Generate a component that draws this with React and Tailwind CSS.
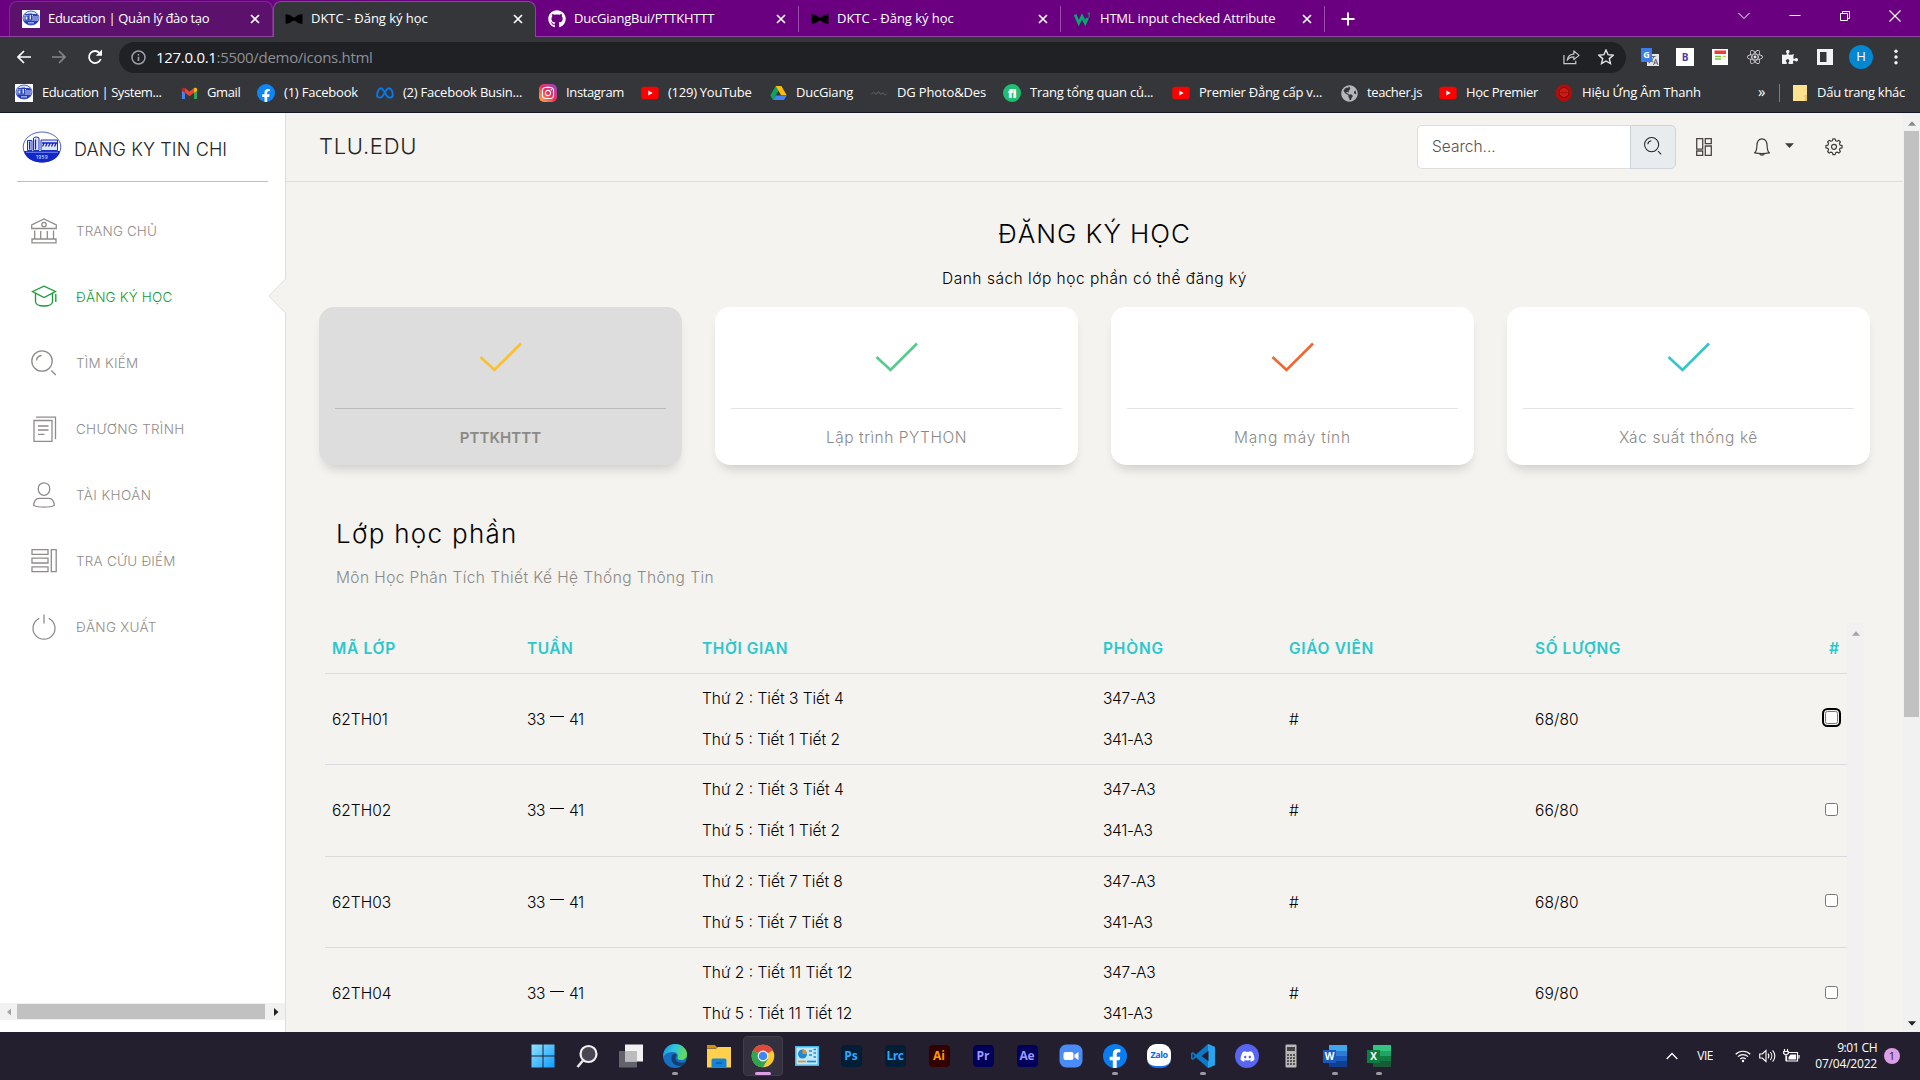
import React from "react";
import { FaGithub, FaReact, FaDiscord, FaFacebookF, FaInstagram, FaPuzzlePiece, FaGlobeAmericas } from "react-icons/fa";
import { MdTranslate } from "react-icons/md";

/* ---------- brand glyphs ---------- */

function SchoolFavicon() {
  return (
    <svg viewBox="0 0 18 18" className="size-[18px]">
      <rect width="18" height="18" fill="#fff" />
      <ellipse cx="9" cy="8" rx="8" ry="7" fill="#dfe5fa" stroke="#3450c0" strokeWidth="0.9" />
      <path d="M3 4.5h12M3 6h3v4H3zM7 4h2.5v6H7zM11 6v4M13 6v4M15 6v4M11 5.5h5" stroke="#2a44b8" strokeWidth="1.1" fill="none" />
      <path d="M1.5 10.5h15a8 6.5 0 0 1-15 0z" fill="#2339c4" />
      <rect x="6" y="12.2" width="6" height="1.2" fill="#b8c3f4" />
    </svg>
  );
}

function BowTie() {
  return (
    <svg viewBox="0 0 18 12" className="w-[18px] h-3">
      <path d="M0.5 1.5 Q4 0.5 8 4.2 h2 Q14 0.5 17.5 1.5 v9 Q14 11.5 10 7.8 h-2 Q4 11.5 0.5 10.5z" fill="#000" />
    </svg>
  );
}

function W3Icon() {
  return (
    <svg viewBox="0 0 18 18" className="size-[18px]">
      <path d="M1 4.5 4.8 13 8 6.5 11.3 13 13.5 8" stroke="#04aa6d" strokeWidth="2.8" fill="none" />
      <path d="M13.5 3.2h2.4l-1.4 1.9c1.4.1 1.6 2.1-.6 2.2" stroke="#04aa6d" strokeWidth="1" fill="none" />
    </svg>
  );
}

function GmailIcon() {
  return (
    <svg viewBox="0 0 18 18" className="size-[17px]">
      <path d="M1 4.5v10.2h3.2V8z" fill="#4285f4" />
      <path d="M17 4.5v10.2h-3.2V8z" fill="#34a853" />
      <path d="M1 4.6C1 2.8 3 2.3 4.2 3.3v5L1 6z" fill="#c5221f" />
      <path d="M17 4.6c0-1.8-2-2.3-3.2-1.3v5L17 6z" fill="#fbbc04" />
      <path d="M4.2 3.3 9 7l4.8-3.7v5L9 12 4.2 8.3z" fill="#ea4335" />
    </svg>
  );
}

function FacebookIcon({ big }) {
  return (
    <span className={big ? "size-6 rounded-full bg-[#0a7cf0] flex items-end justify-center overflow-hidden" : "size-[18px] rounded-full bg-[#0f86f5] flex items-end justify-center overflow-hidden"}>
      <FaFacebookF className={big ? "text-white text-[20px] translate-y-px" : "text-white text-[14px] translate-y-px"} />
    </span>
  );
}

function MetaIcon() {
  return (
    <svg viewBox="0 0 18 12" className="w-[18px] h-[14px]">
      <path d="M1.2 9C1 5 2.600 1.200 5 1.200c3 0 5 9.400 8.200 9.400 2 0 3.600-.6 3.600-2.400 0-3.400-1.600-7-4-7C9.800 1.200 7.600 10.600 4.400 10.600c-1.800 0-3.100-.2-3.200-1.600z" fill="none" stroke="#0a78e8" strokeWidth="1.900" />
    </svg>
  );
}

function InstagramIcon() {
  return (
    <span className="size-[18px] rounded-[5px] bg-linear-to-tr from-[#fdb23b] via-[#ee2a5a] to-[#8a35c9] flex items-center justify-center">
      <FaInstagram className="text-white text-[14px]" />
    </span>
  );
}

function YouTubeIcon() {
  return (
    <svg viewBox="0 0 18 18" className="size-[18px]">
      <rect x="0.3" y="2.8" width="17.4" height="12.4" rx="3" fill="#f00" />
      <path d="M7.3 6.4v5.2L11.6 9z" fill="#fff" />
    </svg>
  );
}

function DriveIcon() {
  return (
    <svg viewBox="0 0 18 16" className="w-[17px] h-4">
      <path d="M6 0.5h6l-3 5L3.2 15.5 0.3 10.6z" fill="#11a35b" />
      <path d="M6 0.5h6l5.7 10h-5.9z" fill="#fbbd0a" />
      <path d="M6.2 10.6h11.5l-2.9 4.9H3.2z" fill="#4285f4" />
    </svg>
  );
}

function SignatureIcon() {
  return (
    <svg viewBox="0 0 16 8" className="w-4 h-2">
      <path d="M0.5 5c2-2 3-2 4 0s2-3 3.500-2 .5 2.500 2 2 2-2 3 0 1.500.5 2.500 0" fill="none" stroke="#6b6c70" strokeWidth="0.9" />
    </svg>
  );
}

function FiverrIcon() {
  return (
    <span className="size-[18px] rounded-full bg-[#1dbf73] text-white font-extrabold text-[13px] leading-none flex items-center justify-center tracking-[-0.5px]">fi</span>
  );
}

function SealIcon() {
  return (
    <svg viewBox="0 0 18 18" className="size-[18px]">
      <path d="M9 .6c5 0 8 3.300 8 8.200S13.500 17.500 9 17.500 .8 13.700 1 8.800 4 .6 9 .6z" fill="#b30d0d" />
      <circle cx="9" cy="8.500" r="5" fill="#cc1c18" stroke="#850808" strokeWidth="1" />
      <path d="M5.500 8.500h7" stroke="#a3100e" strokeWidth="1.400" />
    </svg>
  );
}

function FolderIcon() {
  return (
    <svg viewBox="0 0 14 16" className="w-[14px] h-4">
      <path d="M0 0h14v16H0z" fill="#fce28f" />
      <path d="M10 11.500h2v4.500h2v-6h-2z" fill="#f0c656" />
    </svg>
  );
}

/* ---------- browser chrome ---------- */

function CloseX({ className }) {
  return (
    <svg viewBox="0 0 10 10" className={className}>
      <path d="M1 1l8 8M9 1l-8 8" stroke="#fff" strokeWidth="1.700" fill="none" />
    </svg>
  );
}

function Tab({ icon, title, className, textClass, end }) {
  return (
    <div className={"flex items-center " + className}>
      <span className="w-[18px] flex justify-center shrink-0">{icon}</span>
      <span className={"ml-2 flex-1 whitespace-nowrap text-[13px] text-white " + textClass}>{title}</span>
      <CloseX className={"size-[10px] shrink-0 " + end} />
    </div>
  );
}

function TabStrip() {
  return (
    <div className="h-[37px] bg-[#6a0080] flex items-stretch border-b border-[#8e44a0]">
      <div className="w-[9px]" />
      <Tab icon={<SchoolFavicon />} title="Education | Quản lý đào tạo" textClass="tracking-[-0.33px]" end="mr-3"
        className="w-[264px] pl-3 bg-[#5c126c] border border-b-0 border-[#7d2a90] rounded-t-lg mt-px" />
      <Tab icon={<BowTie />} title="DKTC - Đăng ký học" textClass="tracking-[-0.05px]" end="mr-3"
        className="w-[263px] pl-[11px] bg-[#35363a] border border-b-0 border-[#8e44a0] rounded-t-lg -mb-px mt-px pb-px" />
      <Tab icon={<FaGithub className="text-white text-[18px]" />} title="DucGiangBui/PTTKHTTT" textClass="tracking-[-0.2px]" end="mr-3" className="w-[262px] pl-3 pt-0.5" />
      <div className="w-px h-[26px] mt-[6px] bg-[#9a4daa]" />
      <Tab icon={<BowTie />} title="DKTC - Đăng ký học" textClass="tracking-[-0.05px]" end="mr-3" className="w-[261px] pl-3 pt-0.5" />
      <div className="w-px h-[26px] mt-[6px] bg-[#9a4daa]" />
      <Tab icon={<W3Icon />} title="HTML input checked Attribute" textClass="tracking-[-0.2px]" end="mr-3" className="w-[263px] pl-[13px] pt-0.5" />
      <div className="w-px h-[26px] mt-[6px] bg-[#9a4daa]" />
      <svg viewBox="0 0 14 14" className="size-[14px] mt-3 ml-4">
        <path d="M7 0.500v13M0.500 7h13" stroke="#fff" strokeWidth="2" />
      </svg>
      <div className="ml-auto flex items-start pt-[10px] pr-[19px]">
        <svg viewBox="0 0 12 12" className="size-3 mr-[39px]"><path d="M0.500 3 6 8.500 11.500 3" fill="none" stroke="#fff" strokeWidth="1" /></svg>
        <svg viewBox="0 0 12 12" className="size-3 mr-[38px]"><path d="M0.500 5.500h11" stroke="#fff" strokeWidth="1" /></svg>
        <svg viewBox="0 0 12 12" className="size-3 mr-[38px]"><path d="M1.500 3.500h7v7h-7zM3.500 3.500v-2h7v7h-2" fill="none" stroke="#fff" strokeWidth="1" /></svg>
        <svg viewBox="0 0 12 12" className="size-3"><path d="M0.500 0.500l11 11M11.500 0.500l-11 11" fill="none" stroke="#fff" strokeWidth="1.100" /></svg>
      </div>
    </div>
  );
}

function Toolbar() {
  return (
    <div className="h-[39px] flex items-center pl-[17px] pr-[18px] pt-px">
      <svg viewBox="0 0 14 14" className="size-[14px]"><path d="M14 7H1.500M7 1 1 7l6 6" fill="none" stroke="#fff" strokeWidth="1.700" /></svg>
      <svg viewBox="0 0 14 14" className="size-[14px] ml-[21px]"><path d="M0 7h12.500M7 1l6 6-6 6" fill="none" stroke="#85868a" strokeWidth="1.700" /></svg>
      <svg viewBox="0 0 16 16" className="size-4 ml-[21px]">
        <path d="M13.700 10A6 6 0 1 1 12.500 4" fill="none" stroke="#fff" strokeWidth="1.800" />
        <path d="M15 0.500v6.200H8.800z" fill="#fff" />
      </svg>
      <div className="ml-4 w-[1507px] h-[31px] rounded-full bg-[#202124] flex items-center pl-3 pr-3">
        <svg viewBox="0 0 15 15" className="size-[15px]">
          <circle cx="7.500" cy="7.500" r="6.500" fill="none" stroke="#9aa0a6" strokeWidth="1.500" />
          <path d="M7.500 6.700v4.300M7.500 4v1.600" stroke="#9aa0a6" strokeWidth="1.600" />
        </svg>
        <span className="ml-[10px] text-[15px] tracking-[-0.3px] text-[#8d9096]"><span className="text-white">127.0.0.1</span>:5500/demo/icons.html</span>
        <svg viewBox="0 0 18 16" className="ml-auto w-[17px] h-4">
          <path d="M1 6v9h12.500v-3" fill="none" stroke="#c4c7cb" strokeWidth="1.300" />
          <path d="M4.500 11.500C5 7.500 7.500 5 11.500 5V1.500L17 6.300l-5.500 4.500V7.800c-3 0-5.500 1-7 3.700z" fill="none" stroke="#c4c7cb" strokeWidth="1.300" strokeLinejoin="round" />
        </svg>
        <svg viewBox="0 0 16 16" className="size-4 ml-[18px]">
          <path d="M8 1l2.100 4.700 5.100.5-3.900 3.400 1.200 5L8 12l-4.500 2.600 1.200-5L.8 6.200l5.100-.5z" fill="none" stroke="#e4e6e9" strokeWidth="1.400" />
        </svg>
      </div>
      <div className="flex items-center ml-[15px] gap-[17px]">
        <span className="relative w-[18px] h-[18px]">
          <MdTranslate className="absolute right-0 bottom-0 size-[12px] bg-[#e3e5e8] text-[#5f6368]" />
          <span className="absolute left-0 top-0 w-[11px] h-[14px] bg-[#3b7ded] text-white text-[9px] font-bold leading-[14px] text-center">G</span>
        </span>
        <span className="size-[18px] bg-white text-[#4b3aa5] text-[10px] font-bold flex items-center justify-center">B</span>
        <svg viewBox="0 0 16 16" className="size-4 mx-px">
          <path d="M0 0h16v16H0z" fill="#fff" /><path d="M2.500 1.500h11.500v3.500H2.500z" fill="#ee3b3b" />
          <path d="M3 7.500h6M3 10h6" stroke="#7bc043" strokeWidth="1.500" /><path d="M10.500 7.500h3.500" stroke="#e6c64a" strokeWidth="1.500" />
        </svg>
        <FaReact className="size-4 text-[#e8e8e8] mx-px" />
        <FaPuzzlePiece className="size-4 text-[#f1f3f4] mx-px" />
        <svg viewBox="0 0 16 16" className="size-4 mx-px"><path d="M0 0h16v16H0zM3 3v10h6.500V3z" fill="#f1f3f4" fillRule="evenodd" /></svg>
        <span className="size-6 -ml-[2px] rounded-full bg-[#0288d1] text-white text-[13px] flex items-center justify-center">H</span>
        <svg viewBox="0 0 4 16" className="w-1 h-4 ml-1"><circle cx="2" cy="2.200" r="1.700" fill="#f1f3f4" /><circle cx="2" cy="8" r="1.700" fill="#f1f3f4" /><circle cx="2" cy="13.800" r="1.700" fill="#f1f3f4" /></svg>
      </div>
    </div>
  );
}

const bookmarks = [
  { icon: <SchoolFavicon />, label: "Education | System...", box: "w-[165px] tracking-[-0.42px]" },
  { icon: <GmailIcon />, label: "Gmail", box: "w-[77px] tracking-[-0.4px]" },
  { icon: <FacebookIcon />, label: "(1) Facebook", box: "w-[119px] tracking-[-0.2px]" },
  { icon: <MetaIcon />, label: "(2) Facebook Busin...", box: "w-[163px] tracking-[-0.22px]" },
  { icon: <InstagramIcon />, label: "Instagram", box: "w-[102px] tracking-[-0.36px]" },
  { icon: <YouTubeIcon />, label: "(129) YouTube", box: "w-[128px] tracking-[-0.25px]" },
  { icon: <DriveIcon />, label: "DucGiang", box: "w-[101px] tracking-[-0.2px]" },
  { icon: <SignatureIcon />, label: "DG Photo&Des", box: "w-[133px] tracking-[-0.15px]" },
  { icon: <FiverrIcon />, label: "Trang tổng quan củ...", box: "w-[169px] tracking-[-0.22px]" },
  { icon: <YouTubeIcon />, label: "Premier Đẳng cấp v...", box: "w-[168px] tracking-[-0.25px]" },
  { icon: <FaGlobeAmericas className="size-[17px] text-[#b4b8bd]" />, label: "teacher.js", box: "w-[99px] tracking-[-0.38px]" },
  { icon: <YouTubeIcon />, label: "Học Premier", box: "w-[116px] tracking-[-0.3px]" },
  { icon: <SealIcon />, label: "Hiệu Ứng Âm Thanh", box: "w-[203px] tracking-[-0.18px]" },
];

function BookmarksBar() {
  return (
    <div className="h-9 flex items-center pl-[15px] pr-[15px] pb-[2px] text-[13px] text-white whitespace-nowrap">
      {bookmarks.map((b, i) => (
        <div key={i} className={"flex items-center gap-[9px] " + b.box}>
          <span className="w-[18px] flex justify-center">{b.icon}</span>
          <span>{b.label}</span>
        </div>
      ))}
      <span className="text-[15px] -mt-1">»</span>
      <div className="w-px h-[18px] bg-[#7b7c80] ml-auto mr-[13px]" />
      <FolderIcon />
      <span className="ml-[10px] tracking-[-0.28px]">Dấu trang khác</span>
    </div>
  );
}

/* ---------- line icons of the dashboard ---------- */

function LineIcon({ className, children, width = 1.3 }) {
  return (
    <svg viewBox="0 0 26 26" className={className} fill="none" stroke="currentColor" strokeWidth={width}>
      {children}
    </svg>
  );
}

const glyphs = {
  bank: <><path d="M.7 10.500V6.800L13 .9l12.300 5.900v3.700zM3.700 12.500v8M9.700 13v7.500M16.300 13v7.500M22.500 12.500v8M1 21h24v3.900H1z" /><circle cx="13" cy="6.500" r="2.200" /></>,
  hat: <><path d="M1.500 7.500 13 2.200l11.500 5.300L13 13.500zM4.500 9.500v8c0 6 17 6 17 0v-8M24.800 10v8" /></>,
  zoom: <><circle cx="11" cy="11" r="10.200" /><path d="M5.500 10.500c.3-3 2-4.700 5-5M20.300 20.500l4.500 4.500" /></>,
  paper: <><path d="M3 4.500h18v20.800H3zM5 1.200h19.500v22M7 10h10.500M7 14h10.500M7 18.300h6.500" /></>,
  user: <><path d="M13 .8c3.500 0 5.800 2.600 5.800 6.200S16 13.400 13 13.400 7.200 10.600 7.200 7 9.500.8 13 .8zM8 16.300h10c3 0 5.300 3 5.300 7.200-4.500 2.200-16 2.200-20.600 0 0-4.200 2.300-7.200 5.300-7.200z" /></>,
  layout: <><path d="M1 1.600h16v4.800H1zM1 10.200h16V15H1zM1 18.800h16v4.800H1zM20.300 1.600h4.900v22h-4.900z" /></>,
  power: <><path d="M13 .5v9M8.200 4.300a11 11 0 1 0 9.600 0" /></>,
};

const menu = [
  { icon: "bank", label: "TRANG CHỦ", track: "tracking-[0.1px]" },
  { icon: "hat", label: "ĐĂNG KÝ HỌC", track: "tracking-[0.18px]", active: true },
  { icon: "zoom", label: "TÌM KIẾM", track: "tracking-[0.22px]" },
  { icon: "paper", label: "CHƯƠNG TRÌNH", track: "tracking-[0.28px]" },
  { icon: "user", label: "TÀI KHOẢN", track: "tracking-[0.4px]" },
  { icon: "layout", label: "TRA CỨU ĐIỂM", track: "tracking-[0.22px]" },
  { icon: "power", label: "ĐĂNG XUẤT", track: "tracking-[0.28px]" },
];

function SchoolLogo() {
  return (
    <svg viewBox="0 0 40 32" className="w-10 h-8">
      <ellipse cx="20" cy="16" rx="18.800" ry="15" fill="#fff" stroke="#2038b8" strokeWidth="0.8" />
      <path d="M2 20h36C36.500 27.500 29 31.500 20 31.500S3.500 27.500 2 20z" fill="#1226c8" />
      <path d="M5.500 9.500h4.500v10H5.500zM11.500 7c1.500-1.500 4.500-1 5.500 0v12.500h-5.500zM19 9h16.500v10.500H19z" fill="#dfe5fd" stroke="#1a30be" strokeWidth="1" />
      <path d="M7.700 10.500v8M13.500 8.500v10M20 12h15M20.500 15.500l1.500-3M23.500 15.500l1.500-3M26.500 15.500l1.500-3M29.500 15.500l1.500-3M32.500 15.500l1.500-3" stroke="#1226c0" strokeWidth="1.300" />
      <path d="M4 21.300h32" stroke="#9fb0ff" strokeWidth="0.700" />
      <text x="20" y="28.300" textAnchor="middle" fontSize="4.800" fontFamily="Inter" letterSpacing="0.3" fill="#dfe5ff">1959</text>
    </svg>
  );
}

function Sidebar() {
  return (
    <aside className="relative w-[286px] shrink-0 bg-white border-r border-[#ddd] flex flex-col">
      <div className="mx-[17px] h-[69px] border-b border-[#bdbdbd] flex items-start pt-[18px] pl-[5px]">
        <SchoolLogo />
        <span className="ml-3 mt-[5px] text-[18px] leading-[27px] font-light tracking-[0.12px] text-[#252422]">DANG KY TIN CHI</span>
      </div>
      <nav className="flex flex-col mt-4">
        {menu.map((m) => (
          <div key={m.icon} className={"h-[66px] flex items-center pl-[31px] " + (m.active ? "text-[#159a35]" : "text-[#8f8d89]")}>
            <LineIcon className="size-[26px]" width={1.3}>{glyphs[m.icon]}</LineIcon>
            <span className={"ml-[19px] text-[13.5px] font-light " + m.track}>{m.label}</span>
          </div>
        ))}
      </nav>
      <svg viewBox="0 0 18 36" className="absolute -right-px top-[165px] w-[18px] h-9">
        <path d="M18 .5 1 18l17 17.500z" fill="#f4f3ef" />
        <path d="M17.500 1 1 18l16.500 17" fill="none" stroke="#ddd" strokeWidth="1" />
      </svg>
      <div className="mt-auto mb-3 h-[17px] bg-[#f1f1f1] flex items-center justify-between px-[6px]">
        <svg viewBox="0 0 6 8" className="w-[6px] h-2"><path d="M5 .5v7L1 4z" fill="#a3a3a3" /></svg>
        <div className="w-[248px] h-[15px] bg-[#c1c1c1] -ml-1" />
        <svg viewBox="0 0 6 8" className="w-[6px] h-2"><path d="M1 0v8L5.500 4z" fill="#222" /></svg>
      </div>
    </aside>
  );
}

function Navbar() {
  return (
    <header className="h-[69px] border-b border-[#ddd] flex items-start pl-[33px] text-[#403d39]">
      <span className="mt-[17px] text-[22px] leading-8 font-light tracking-[0.7px] text-[#252422]">TLU.EDU</span>
      <div className="ml-auto mt-3 flex h-[44px]">
        <div className="w-[213px] bg-white border border-[#ddd] border-r-0 rounded-l-[5px] flex items-center pl-[14px] text-[15.5px] font-light text-[#55524d]">Search...</div>
        <div className="w-[46px] bg-[#e9ecef] border border-[#ced4da] rounded-r-[5px] flex justify-center pt-[11px]">
          <LineIcon className="size-[18px] text-[#212529]" width={1.5}>{glyphs.zoom}</LineIcon>
        </div>
      </div>
      <svg viewBox="0 0 16 18" className="w-4 h-[18px] mt-[25px] ml-5" fill="none" stroke="#4a4542" strokeWidth="1.300">
        <path d="M.7.700h6v10.500h-6zM9.300.700h6v5h-6zM.7 13h6v4.300h-6zM9.300 8h6v9.300h-6z" />
      </svg>
      <svg viewBox="0 0 16 18" className="w-4 h-[18px] mt-[25px] ml-[42px]" fill="none" stroke="#403d39" strokeWidth="1.200">
        <path d="M.7 14.800c2-1.500 2-3.300 2.200-7C3 3.500 5 .8 8 .8s5 2.700 5.100 7c.2 3.700.2 5.500 2.200 7-4 .8-10.600.8-14.600 0zM5.500 15.500c.5 2.200 4.500 2.200 5 0" />
      </svg>
      <svg viewBox="0 0 9 5" className="w-[9px] h-[5px] mt-[30px] ml-[15px]"><path d="M0 .3h9L4.500 5z" fill="#403d39" /></svg>
      <svg viewBox="0 0 18 18" className="size-[18px] mt-[25px] ml-[31px] mr-[60px]" fill="none" stroke="#403d39" strokeWidth="1.200" strokeLinejoin="round">
        <path d="M7.400 2.700 7.900.800h2.200l.5 1.900 1.500.6 1.700-1 1.600 1.600-1 1.700.6 1.500 2.100.5v2.200l-2.100.5-.6 1.500 1 1.700-1.600 1.600-1.700-1-1.500.6-.5 2H7.900l-.5-2-1.500-.6-1.700 1-1.600-1.600 1-1.700-.6-1.500-2.100-.5V7.600L3 7.100l.6-1.500-1-1.700 1.600-1.600 1.700 1z" />
        <circle cx="9" cy="8.800" r="2.500" />
      </svg>
    </header>
  );
}

const cards = [
  { name: "PTTKHTTT", check: "text-[#fbc02d]", box: "bg-[#ddd]", line: "border-[#bbb]", label: "font-semibold text-[15px] tracking-[0.1px] text-[#8b8986]" },
  { name: "Lập trình PYTHON", check: "text-[#56cc8c]", box: "bg-white", line: "border-[#e3e3e3]", label: "font-light text-[15.5px] tracking-[0.52px] text-[#8b8986]" },
  { name: "Mạng máy tính", check: "text-[#f0682e]", box: "bg-white", line: "border-[#e3e3e3]", label: "font-light text-[15.5px] tracking-[0.8px] text-[#8b8986]" },
  { name: "Xác suất thống kê", check: "text-[#33c7cd]", box: "bg-white", line: "border-[#e3e3e3]", label: "font-light text-[15.5px] tracking-[0.64px] text-[#8b8986]" },
];

function SubjectCard({ card }) {
  return (
    <div className={"h-[158px] rounded-[15px] shadow-[0_8px_12px_-5px_rgba(0,0,0,0.18)] px-4 flex flex-col items-center " + card.box}>
      <svg viewBox="0 0 44 30" className={"w-11 h-[30px] mt-[35px] " + card.check}>
        <path d="M1.500 15 15.500 28 42 1.500" fill="none" stroke="currentColor" strokeWidth="2.700" />
      </svg>
      <div className={"w-full border-t mt-[36px] " + card.line} />
      <span className={"mt-[17px] leading-6 " + card.label}>{card.name}</span>
    </div>
  );
}

const rows = [
  { code: "62TH01", t1: "Thứ 2 : Tiết 3 Tiết 4", t2: "Thứ 5 : Tiết 1 Tiết 2", count: "68/80", focus: true, h: "h-[91px]" },
  { code: "62TH02", t1: "Thứ 2 : Tiết 3 Tiết 4", t2: "Thứ 5 : Tiết 1 Tiết 2", count: "66/80", h: "h-[92px]" },
  { code: "62TH03", t1: "Thứ 2 : Tiết 7 Tiết 8", t2: "Thứ 5 : Tiết 7 Tiết 8", count: "68/80", h: "h-[91px]" },
  { code: "62TH04", t1: "Thứ 2 : Tiết 11 Tiết 12", t2: "Thứ 5 : Tiết 11 Tiết 12", count: "69/80", h: "h-[92px]" },
];

const columns = "grid grid-cols-[195px_175px_401px_186px_246px_275px_1fr] pl-[7px]";

function ClassTable() {
  return (
    <div className="flex-1 min-h-0 overflow-hidden flex mt-[33px]">
      <div className="w-[1522px] font-light text-[15.5px] text-black">
        <div className={"h-[51px] items-end pb-[12px] border-b border-[#dadbe0] font-semibold text-[#2cc7cb] leading-6 " + columns}>
          <span className="tracking-[0.7px]">MÃ LỚP</span>
          <span className="tracking-[0.5px]">TUẦN</span>
          <span className="tracking-[0.56px]">THỜI GIAN</span>
          <span className="tracking-[0.83px]">PHÒNG</span>
          <span className="tracking-[0.65px]">GIÁO VIÊN</span>
          <span className="tracking-[0.57px]">SỐ LƯỢNG</span>
          <span className="justify-self-end pr-[8px]">#</span>
        </div>
        {rows.map((r) => (
          <div key={r.code} className={"items-center border-b border-[#dadbe0] " + r.h + " " + columns}>
            <span className="pt-px">{r.code}</span>
            <span className="flex items-center tracking-[-0.4px] pt-px">33<span className="w-[14px] h-px bg-black mx-[5px] -mt-[6px]" />41</span>
            <div className="flex flex-col gap-[17px] leading-6"><span>{r.t1}</span><span>{r.t2}</span></div>
            <div className="flex flex-col gap-[17px] leading-6 tracking-[-0.3px]"><span>347-A3</span><span>341-A3</span></div>
            <span className="pt-px">#</span>
            <span className="pt-px tracking-[0.1px]">{r.count}</span>
            <span className={"justify-self-end mr-[9px] -mt-[3px] size-[13px] bg-white border border-[#767676] rounded-[2.500px] " + (r.focus ? "outline-2 outline-offset-1 outline-black" : "")} />
          </div>
        ))}
      </div>
      <div className="w-[17px] bg-[#f1f1f1] flex justify-center pt-2">
        <svg viewBox="0 0 8 5" className="w-2 h-[5px]"><path d="M4 .3 8 4.700H0z" fill="#a3a3a3" /></svg>
      </div>
    </div>
  );
}

function Main() {
  return (
    <main className="flex-1 min-w-0 bg-[#f4f3ef] flex flex-col">
      <Navbar />
      <section className="flex-1 min-h-0 pl-[33px] pr-[33px] flex flex-col">
        <h1 className="mt-[32px] text-center text-[26px] leading-10 font-light tracking-[1px] text-black">ĐĂNG KÝ HỌC</h1>
        <p className="mt-[13px] text-center text-[15.5px] leading-6 font-light tracking-[0.51px] text-black">Danh sách lớp học phần có thể đăng ký</p>
        <div className="mt-4 grid grid-cols-4 gap-[33px]">
          {cards.map((c) => <SubjectCard key={c.name} card={c} />)}
        </div>
        <h2 className="mt-[49px] ml-[17px] text-[26px] leading-10 font-light tracking-[1.300px] text-black">Lớp học phần</h2>
        <p className="mt-3 ml-[17px] text-[15.5px] leading-6 font-light tracking-[0.41px] text-[#8b8986]">Môn Học Phân Tích Thiết Kế Hệ Thống Thông Tin</p>
        <div className="flex-1 min-h-0 flex pl-[6px]"><ClassTable /></div>
      </section>
    </main>
  );
}

function PageScrollbar() {
  return (
    <div className="w-[17px] shrink-0 bg-[#f1f1f1] flex flex-col items-center">
      <svg viewBox="0 0 8 5" className="w-2 h-[5px] mt-2"><path d="M4 .3 8 4.700H0z" fill="#8a8a8a" /></svg>
      <div className="w-[15px] h-[586px] mt-[5px] bg-[#c1c1c1]" />
      <svg viewBox="0 0 8 5" className="w-2 h-[5px] mt-auto mb-[6px]"><path d="M4 4.700 0 .3h8z" fill="#222" /></svg>
    </div>
  );
}

/* ---------- taskbar ---------- */

function AdobeTile({ text, className }) {
  return <span className={"w-[21px] h-[22px] rounded-[4px] flex items-center justify-center text-[12px] font-bold leading-none " + className}>{text}</span>;
}

function OfficeTile({ letter, colors, tile }) {
  return (
    <span className="relative w-6 h-[22px] flex items-center">
      <svg viewBox="0 0 24 22" className="w-6 h-[22px]">
        <path d="M6 0h18v6H6z" fill={colors[0]} /><path d="M6 6h18v5H6z" fill={colors[1]} />
        <path d="M6 11h18v5H6z" fill={colors[2]} /><path d="M6 16h18v6H6z" fill={colors[3]} />
      </svg>
      <span className={"absolute left-0 top-[5px] w-[13px] h-[13px] text-white text-[10px] font-bold leading-[13px] text-center " + tile}>{letter}</span>
    </span>
  );
}

const apps = [
  { icon: <svg viewBox="0 0 24 24" className="size-6"><defs><linearGradient id="win" x1="0" y1="0" x2="1" y2="1"><stop offset="0" stopColor="#8fe3ff" /><stop offset="1" stopColor="#0f9bff" /></linearGradient></defs><path d="M.5.500h11v11H.500zM12.500.500h11v11h-11zM.5 12.500h11v11H.500zM12.500 12.500h11v11h-11z" fill="url(#win)" /></svg> },
  { icon: <svg viewBox="0 0 24 24" className="size-6"><circle cx="13.500" cy="10" r="8" fill="#4a4653" stroke="#f2f2f2" strokeWidth="2.200" /><path d="M8 16.500 2.500 23" stroke="#e8e8e8" strokeWidth="2.600" /></svg> },
  { icon: <svg viewBox="0 0 24 24" className="size-6"><path d="M0 7h18v16.500H0z" fill="#62626a" /><path d="M6 .5h18v17H6z" fill="#f1f1f1" /><path d="M6 7h12v10.500H6z" fill="#bcbcbe" /></svg> },
  { icon: <svg viewBox="0 0 24 24" className="size-6"><defs><linearGradient id="edge" x1="0" y1="0" x2="1" y2="0.300"><stop offset="0" stopColor="#1793dc" /><stop offset="0.500" stopColor="#2fc3e0" /><stop offset="1" stopColor="#62dc5c" /></linearGradient></defs><circle cx="12" cy="12" r="12" fill="#1470c4" /><path d="M.2 11C1 4.500 6 0 12 0c7 0 12 5 12 10 0 4-3 6-6 6-2.500 0-4-1-3.500-2.500C15.500 11 14 8 10 8 5 8 1 10 .2 14z" fill="url(#edge)" /><path d="M9 11.500c-2 5 1.500 11 8.500 10.500 2.500-.2 4.500-2 5.500-4-4 1.500-10 1-10.500-4 0-1.500 1-2 1-3.500-1-1.500-4-.5-4.500 1z" fill="#16355e" opacity=".8" /></svg>, dot: true },
  { icon: <svg viewBox="0 0 24 24" className="size-6"><path d="M0 1h8l2.500 3H0z" fill="#d99000" /><path d="M0 4.500 9 4.500l2-1.500h13v20.500H0z" fill="#ffd04e" /><path d="M4.500 16.500c0-1.500 1-2 2-2h11c1.500 0 2 .8 2 2v7h-15z" fill="#1583d8" /><path d="M9 19h6" stroke="#0a5ca8" strokeWidth="1.400" /></svg> },
  { icon: <svg viewBox="0 0 24 24" className="size-6"><circle cx="12" cy="12" r="11.300" fill="#fbc934" /><path d="M12 12 2.200 6.300A11.300 11.300 0 0 1 21.800 6.300z" fill="#e0483b" /><path d="M12 .7a11.300 11.300 0 0 1 9.800 5.600H12z" fill="#e0483b" /><path d="M2.200 6.300A11.300 11.300 0 0 0 12 23.300l5-8.500-5-2.800z" fill="#2fa552" /><circle cx="12" cy="12" r="5.400" fill="#fff" /><circle cx="12" cy="12" r="4.300" fill="#4285f4" /></svg>, active: true },
  { icon: <svg viewBox="0 0 24 20" className="w-6 h-5"><path d="M0 0h24v20H0z" fill="#45b8ec" /><path d="M1.500 1.500h21v17h-21z" fill="#bfe9fb" /><circle cx="7.500" cy="8" r="4.500" fill="#1e88d2" /><path d="M7.500 8V3.500A4.500 4.500 0 0 1 12 8z" fill="#f08a24" /><path d="M14 5h3M14 9h3M18.500 3.500h2.500M18.500 7h2.500M18.500 11h2.500" stroke="#1e88d2" strokeWidth="1.700" /><path d="M3 15.500h8" stroke="#f08a24" strokeWidth="1.700" /><path d="M12 15.500h9" stroke="#1e88d2" strokeWidth="1.700" /></svg> },
  { icon: <AdobeTile text="Ps" className="bg-[#001e36] text-[#31a8ff]" /> },
  { icon: <AdobeTile text="Lrc" className="bg-[#001e36] text-[#31a8ff] tracking-[-0.5px]" /> },
  { icon: <AdobeTile text="Ai" className="bg-[#330000] text-[#ff9a00]" /> },
  { icon: <AdobeTile text="Pr" className="bg-[#00005b] text-[#9999ff]" /> },
  { icon: <AdobeTile text="Ae" className="bg-[#00005b] text-[#9999ff] tracking-[-0.3px]" /> },
  { icon: <svg viewBox="0 0 24 24" className="size-6"><rect x=".5" y=".5" width="23" height="23" rx="7" fill="#4a8cf7" /><rect x="4.500" y="8" width="10" height="8" rx="2" fill="#fff" /><path d="M15.500 10.800 19.500 8v8l-4-2.800z" fill="#fff" /></svg> },
  { icon: <FacebookIcon big />, dot: true },
  { icon: <span className="size-6 rounded-[9px] bg-white border-b-2 border-[#1a6ff0] text-[#0b66e8] text-[9px] font-bold flex items-center justify-center tracking-[-0.5px]">Zalo</span> },
  { icon: <svg viewBox="0 0 24 24" className="size-6"><path d="M17 0l7 3v18l-7 3L5 13.500 1.800 16 0 15V9l1.800-1L5 10.500z" fill="#0d79c9" /><path d="M17 0l7 3v18l-7 3z" fill="#2ba2ec" /><path d="M17.500 6.800v10.400L10.500 12zM1.500 9.800v4.400L3.700 12z" fill="#231f2e" /></svg>, dot: true },
  { icon: <span className="size-6 rounded-full bg-[#5865f2] flex items-center justify-center"><FaDiscord className="text-white text-[15px]" /></span> },
  { icon: <svg viewBox="0 0 12 24" className="w-3 h-6"><rect x=".5" y=".5" width="11" height="23" rx="1" fill="#b9b9b9" /><path d="M2 3h8v4H2z" fill="#434343" /><path d="M3 10v11M6 10v11M9 10v11" stroke="#3c3c3c" strokeWidth="1.600" strokeDasharray="2 1" /></svg> },
  { icon: <OfficeTile letter="W" colors={["#41a5ee", "#2b7cd3", "#185abd", "#103f91"]} tile="bg-[#185abd]" />, dot: true },
  { icon: <OfficeTile letter="X" colors={["#33c481", "#21a366", "#107c41", "#185c37"]} tile="bg-[#107c41]" />, dot: true },
];

function Taskbar() {
  return (
    <footer className="h-12 bg-[#231f2e] flex pl-[521px] text-white">
      {apps.map((a, i) => (
        <div key={i} className="w-11 h-12 flex flex-col items-center pt-1">
          <div className={"w-10 h-10 rounded flex flex-col items-center " + (a.active ? "bg-[#34303f] border border-[#403c4a]" : "border border-transparent")}>
            <div className="h-8 w-10 pt-[6px] flex items-center justify-center">{a.icon}</div>
            {a.active ? <div className="w-4 h-[3px] rounded-full bg-[#dc9ee6] mt-1" /> : null}
            {a.dot ? <div className="w-[6px] h-[3px] rounded-full bg-[#9b99a1] mt-1" /> : null}
          </div>
        </div>
      ))}
      <div className="ml-auto flex items-center pr-5">
        <svg viewBox="0 0 12 8" className="w-3 h-2"><path d="M.7 7 6 1.500 11.300 7" fill="none" stroke="#fff" strokeWidth="1.300" /></svg>
        <span className="ml-[19px] text-[12px] tracking-[-0.5px]">VIE</span>
        <svg viewBox="0 0 16 14" className="w-4 h-[14px] ml-[22px]" fill="none" stroke="#fff" strokeWidth="1.200">
          <path d="M.7 5.200a10.500 10.500 0 0 1 14.600 0M3 7.700a7 7 0 0 1 10 0M5.300 10a4 4 0 0 1 5.400 0" /><circle cx="8" cy="12" r="1.200" fill="#fff" stroke="none" />
        </svg>
        <svg viewBox="0 0 17 14" className="w-[17px] h-[14px] ml-2" fill="none" stroke="#fff" strokeWidth="1.100">
          <path d="M.7 5v4h2.500L7 12.500v-11L3.200 5zM9 4.700c1 1.300 1 3.300 0 4.600M11.300 3c2 2.300 2 5.700 0 8M13.600 1.300c3 3.300 3 8.100 0 11.400" />
        </svg>
        <svg viewBox="0 0 17 14" className="w-[17px] h-[14px] ml-[7px]" fill="none" stroke="#fff" strokeWidth="1.200">
          <path d="M6 3.500h8.500v8.500H3.500V7" /><path d="M16 6v3.500" /><path d="M7.500 5.500h5.500v5H5.500V8z" fill="#fff" stroke="none" /><path d="M1.500 0v2.500M4.500 0v2.500M.7 2.500h4.600v2L3 6.300.7 4.500zM3 6v6" />
        </svg>
        <div className="ml-[11px] w-[66px] flex flex-col items-end text-[12px] leading-4 tracking-[-0.2px]">
          <span className="tracking-[-0.5px]">9:01 CH</span>
          <span>07/04/2022</span>
        </div>
        <span className="ml-[7px] size-4 rounded-full bg-[#dc9ee6] text-[#231f2e] text-[11px] flex items-center justify-center">1</span>
      </div>
    </footer>
  );
}

export default function App() {
  return (
    <div className="w-[1920px] h-[1080px] overflow-hidden flex flex-col bg-[#35363a] font-['Open_Sans',sans-serif]">
      <TabStrip />
      <Toolbar />
      <BookmarksBar />
      <div className="h-px bg-[#121826]" />
      <div className="flex-1 min-h-0 flex font-[Inter,sans-serif]">
        <Sidebar />
        <Main />
        <PageScrollbar />
      </div>
      <Taskbar />
    </div>
  );
}
